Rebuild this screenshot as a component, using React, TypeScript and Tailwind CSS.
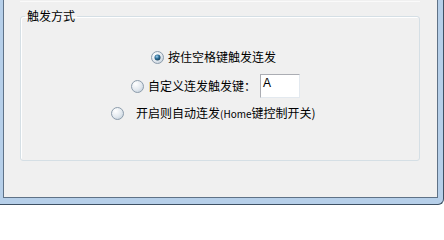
import React from "react";

const FONT = { fontFamily: '"Noto Sans CJK SC", "Liberation Sans", sans-serif' };

function Radio({ checked }: { checked?: boolean }) {
  return (
    <svg width="13" height="13" viewBox="0 0 13 13" className="shrink-0">
      <defs>
        <radialGradient id="rb" cx="0.35" cy="0.3" r="0.8">
          <stop offset="0" stopColor="#ffffff" />
          <stop offset="0.6" stopColor="#e3e9ef" />
          <stop offset="1" stopColor="#c3cfdb" />
        </radialGradient>
        <radialGradient id="dot" cx="0.4" cy="0.35" r="0.7">
          <stop offset="0" stopColor="#9fd0f0" />
          <stop offset="0.5" stopColor="#2d6d95" />
          <stop offset="1" stopColor="#123a55" />
        </radialGradient>
      </defs>
      <circle cx="6.5" cy="6.5" r="6" fill="url(#rb)" stroke="#8d9cab" strokeWidth="1" />
      {checked && <circle cx="6.5" cy="6.5" r="3" fill="url(#dot)" />}
    </svg>
  );
}

export default function App() {
  return (
    <div className="w-[444px] h-[205px] bg-[#b6cfe9] border-r border-b border-[#3e5063] rounded-br-[6px] pl-[3px] pr-[5px] pb-[6px]">
      <div className="h-full bg-[#f0f0f0] border-l border-r border-b border-[#5f7287] flex flex-col" style={FONT}>
        <div className="ml-[16px] mr-[17px] h-[2px] border-b border-[#fafafa]" />
        <fieldset className="ml-[16px] mr-[17px] mt-[6px] h-[153px] border border-[#d5dfe5] rounded-[3px] shadow-[inset_1px_1px_0_#ffffff] px-0 text-[12px] leading-[16px] text-black">
          <legend className="ml-[4px] px-[2px] text-[12px] leading-[16px]">触发方式</legend>
          <div className="flex flex-col pt-[25px]">
            <div className="flex items-center gap-[4px] pl-[130px] h-[16px]">
              <Radio checked />
              <span>按住空格键触发连发</span>
            </div>
            <div className="flex items-center pl-[110px] mt-[9px] h-[24px]">
              <Radio />
              <span className="ml-[4px]">自定义连发触发键：</span>
              <div className="ml-[4px] w-[40px] h-[24px] bg-white border border-[#abadb3] border-r-[#e3e9ef] border-b-[#e3e9ef] pl-[2px] pt-[1px] text-[12px] leading-[14px]" style={{ fontFamily: '"Liberation Sans", sans-serif' }}>
                A
              </div>
            </div>
            <div className="flex items-center pl-[90px] mt-[7px] h-[16px]">
              <Radio />
              <span className="ml-[12px]">
                开启则自动连发<span className="text-[10px]">(Home</span>键控制开关)
              </span>
            </div>
          </div>
        </fieldset>
      </div>
    </div>
  );
}
